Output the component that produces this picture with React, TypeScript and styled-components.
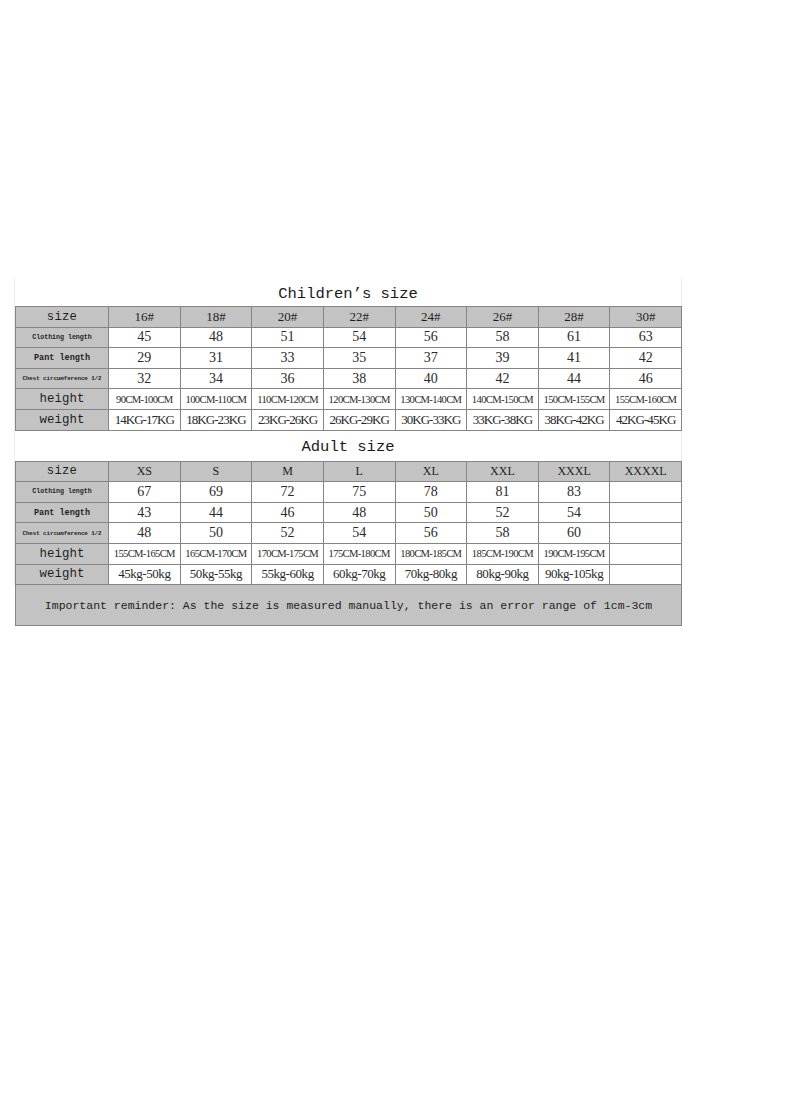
import React from 'react';
import styled, { createGlobalStyle } from 'styled-components';

const GlobalStyle = createGlobalStyle`
  html, body {
    margin: 0;
    padding: 0;
    background: #fff;
  }
  body {
    width: 800px;
    height: 1096px;
    font-family: 'Liberation Serif', serif;
    color: #222;
  }
`;

const Page = styled.div`
  padding: 278px 0 0 14px;
`;

const Sheet = styled.div`
  width: 668px;
  border-left: 1px solid #ececec;
  border-right: 1px solid #ececec;
  box-sizing: border-box;
`;

const Title = styled.div<{ $h: number }>`
  height: ${(p) => p.$h}px;
  display: flex;
  align-items: center;
  justify-content: center;
  font-family: 'Liberation Mono', monospace;
  font-size: 15.5px;
  color: #1a1a1a;
  padding-top: 3px;
  box-sizing: border-box;
`;

const Table = styled.table`
  width: 667px;
  border-collapse: collapse;
  table-layout: fixed;
`;

const Row = styled.tr<{ $h?: number }>`
  height: ${(p) => p.$h ?? 20.6}px;
`;

const Label = styled.td<{ $size: number; $bold?: boolean; $ls?: number }>`
  width: 92px;
  background: #c3c3c3;
  border: 1px solid #858585;
  padding: 0;
  text-align: center;
  font-family: 'Liberation Mono', monospace;
  font-size: ${(p) => p.$size}px;
  font-weight: ${(p) => (p.$bold ? 700 : 400)};
  letter-spacing: ${(p) => p.$ls ?? 0}px;
  white-space: nowrap;
  color: #1e1e1e;
`;

const Head = styled.td<{ $size?: number }>`
  background: #c3c3c3;
  border: 1px solid #858585;
  padding: 0;
  text-align: center;
  font-size: ${(p) => p.$size ?? 12.5}px;
  color: #1e1e1e;
`;

const Cell = styled.td<{ $size?: number; $ls?: number }>`
  background: #fff;
  border: 1px solid #858585;
  padding: 0;
  text-align: center;
  font-size: ${(p) => p.$size ?? 13}px;
  letter-spacing: ${(p) => p.$ls ?? 0}px;
  white-space: nowrap;
  color: #2a2a2a;
`;

const Reminder = styled.div`
  height: 41px;
  background: #c3c3c3;
  border: 1px solid #858585;
  border-top: none;
  display: flex;
  align-items: center;
  justify-content: center;
  font-family: 'Liberation Mono', monospace;
  font-size: 11.5px;
  color: #1e1e1e;
  white-space: nowrap;
  margin-left: 1px;
  width: 667px;
  box-sizing: border-box;
`;

type Section = {
  title: string;
  titleH: number;
  headSize: number;
  sizes: string[];
  clothing: string[];
  pant: string[];
  chest: string[];
  height: string[];
  weight: string[];
  weightLs: number;
};

const children: Section = {
  title: 'Children’s size',
  titleH: 28,
  headSize: 13,
  sizes: ['16#', '18#', '20#', '22#', '24#', '26#', '28#', '30#'],
  clothing: ['45', '48', '51', '54', '56', '58', '61', '63'],
  pant: ['29', '31', '33', '35', '37', '39', '41', '42'],
  chest: ['32', '34', '36', '38', '40', '42', '44', '46'],
  height: [
    '90CM-100CM', '100CM-110CM', '110CM-120CM', '120CM-130CM',
    '130CM-140CM', '140CM-150CM', '150CM-155CM', '155CM-160CM',
  ],
  weight: [
    '14KG-17KG', '18KG-23KG', '23KG-26KG', '26KG-29KG',
    '30KG-33KG', '33KG-38KG', '38KG-42KG', '42KG-45KG',
  ],
  weightLs: -0.95,
};

const adult: Section = {
  title: 'Adult size',
  titleH: 30,
  headSize: 12,
  sizes: ['XS', 'S', 'M', 'L', 'XL', 'XXL', 'XXXL', 'XXXXL'],
  clothing: ['67', '69', '72', '75', '78', '81', '83', ''],
  pant: ['43', '44', '46', '48', '50', '52', '54', ''],
  chest: ['48', '50', '52', '54', '56', '58', '60', ''],
  height: [
    '155CM-165CM', '165CM-170CM', '170CM-175CM', '175CM-180CM',
    '180CM-185CM', '185CM-190CM', '190CM-195CM', '',
  ],
  weight: [
    '45kg-50kg', '50kg-55kg', '55kg-60kg', '60kg-70kg',
    '70kg-80kg', '80kg-90kg', '90kg-105kg', '',
  ],
  weightLs: -0.45,
};

const SizeTable = ({ s }: { s: Section }) => (
  <>
    <Title $h={s.titleH}>{s.title}</Title>
    <Table>
      <tbody>
        <Row>
          <Label $size={12.2} $ls={0.3}>size</Label>
          {s.sizes.map((v, i) => (
            <Head key={i} $size={s.headSize}>{v}</Head>
          ))}
        </Row>
        <Row>
          <Label $size={6.6} $bold>Clothing length</Label>
          {s.clothing.map((v, i) => <Cell key={i} $size={14}>{v}</Cell>)}
        </Row>
        <Row>
          <Label $size={8.5} $bold>Pant length</Label>
          {s.pant.map((v, i) => <Cell key={i} $size={14}>{v}</Cell>)}
        </Row>
        <Row>
          <Label $size={5.9} $bold $ls={-0.1}>Chest circumference 1/2</Label>
          {s.chest.map((v, i) => <Cell key={i} $size={14}>{v}</Cell>)}
        </Row>
        <Row>
          <Label $size={12.4} $ls={0.1}>height</Label>
          {s.height.map((v, i) => <Cell key={i} $size={10.6} $ls={-0.65}>{v}</Cell>)}
        </Row>
        <Row>
          <Label $size={12.4} $ls={0.1}>weight</Label>
          {s.weight.map((v, i) => <Cell key={i} $size={13} $ls={s.weightLs}>{v}</Cell>)}
        </Row>
      </tbody>
    </Table>
  </>
);

const App = () => (
  <>
    <GlobalStyle />
    <Page>
      <Sheet>
        <SizeTable s={children} />
        <SizeTable s={adult} />
      </Sheet>
      <Reminder>
        Important reminder: As the size is measured manually, there is an error range of 1cm-3cm
      </Reminder>
    </Page>
  </>
);

export default App;
